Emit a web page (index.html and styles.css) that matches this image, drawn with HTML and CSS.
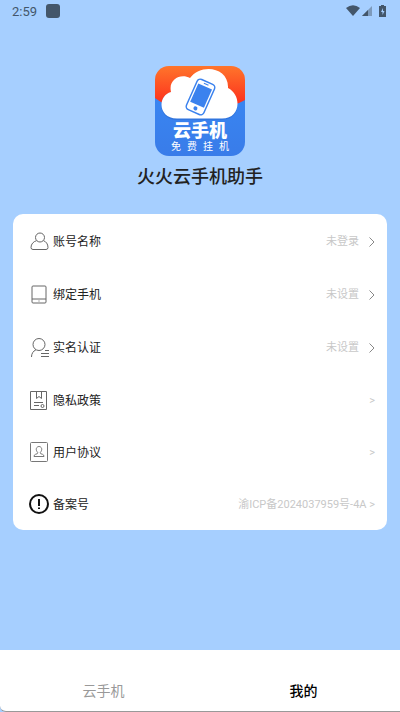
FILE: index.html
```html
<!DOCTYPE html>
<html lang="zh-CN">
<head>
<meta charset="utf-8">
<meta name="viewport" content="width=device-width, initial-scale=1">
<title>火火云手机助手</title>
<link rel="stylesheet" href="styles.css">
</head>
<body>
<header class="status">
  <span class="time">2:59</span>
  <span class="notice"></span>
  <svg class="signals" width="42" height="14" viewBox="0 0 42 14" aria-hidden="true">
    <path d="M0 4Q7-1.500 14 4L7 12Z" fill="#43566a"/>
    <path d="M16 12 26 2v10Z" fill="#7d9abb"/>
    <path d="M16 12l6-6v6Z" fill="#43566a"/>
    <path d="M35 1h3v1h2v11h-7V2h2Z" fill="#43566a"/>
    <path d="M37 4l-2 4h1.500v3L38.500 7H37Z" fill="#a6cfff"/>
  </svg>
</header>
<main class="page">
  <div class="logo">
    <svg class="logo-art" viewBox="0 0 90 90" aria-hidden="true">
      <defs>
        <linearGradient id="sky" x1="0" y1="0" x2="0" y2="1">
          <stop offset="0" stop-color="#ff752b"/><stop offset="1" stop-color="#fc281b"/>
        </linearGradient>
        <linearGradient id="sea" x1="0" y1="0" x2="0" y2="1">
          <stop offset="0" stop-color="#3985f1"/><stop offset="1" stop-color="#397ce9"/>
        </linearGradient>
      </defs>
      <path d="M0 0h90v42H0Z" fill="url(#sky)"/>
      <path d="M0 32Q5 36 12 39h66Q85 37 90 34v56H0Z" fill="url(#sea)"/>
      <path d="M22 54C3 54 1 29 17 26C14 14 28 7 36 13C47-2 73 3 72 25C87 30 86 54 67 54Z" fill="#2867ca" opacity=".45"/>
      <path d="M22 52.500C3 52.500 2 30 16 26C13 13 26 7 35 12C46-3 74 1 73 22C87 29 86 52.500 67 52.500Z" fill="#fff"/>
      <g transform="rotate(24 45.500 31)">
        <rect x="36" y="14.500" width="19" height="33" rx="3.500" fill="#fff" stroke="#3b82ee" stroke-width="1.500"/>
        <rect x="38" y="19.500" width="15" height="20" fill="#3b82ee"/>
        <path d="M43 17h5" stroke="#3b82ee"/>
        <circle cx="45.500" cy="43.500" r="2" fill="#3b82ee"/>
      </g>
    </svg>
    <div class="logo-words">
      <strong>云手机</strong>
      <div class="logo-sub"><span>免</span><span>费</span><span>挂</span><span>机</span></div>
    </div>
  </div>
  <h1>火火云手机助手</h1>
  <nav class="card" aria-label="设置">
    <a class="row" href="#account">
      <svg class="icon" viewBox="0 0 20 20"><circle cx="11" cy="5.500" r="4.500"/><path d="M7.500 8.700C4.500 9.500 2 12 2 15.500q0 2 2 2h13q2 0 2-2C19 12 17 9.500 14.500 8.700"/></svg>
      <span class="name">账号名称</span><span class="value">未登录</span>
      <svg class="arrow" viewBox="0 0 6 10"><path d="M.500.500 5 5 .500 9.500"/></svg>
    </a>
    <a class="row" href="#phone">
      <svg class="icon" viewBox="0 0 20 20"><rect x="3" y="1" width="14" height="17" rx="1"/><path d="M3 14h14M9.500 16h1"/></svg>
      <span class="name">绑定手机</span><span class="value">未设置</span>
      <svg class="arrow" viewBox="0 0 6 10"><path d="M.500.500 5 5 .500 9.500"/></svg>
    </a>
    <a class="row" href="#identity">
      <svg class="icon" viewBox="0 0 20 20"><circle cx="10" cy="6.500" r="6"/><path d="M7 11.700Q2.500 14 2.500 19M16 12.500h4M12 15.500h8M12 18.500h8"/></svg>
      <span class="name">实名认证</span><span class="value">未设置</span>
      <svg class="arrow" viewBox="0 0 6 10"><path d="M.500.500 5 5 .500 9.500"/></svg>
    </a>
    <a class="row compact" href="#privacy">
      <svg class="icon" viewBox="0 0 20 20"><path d="M1.500 1.500h16v18h-16ZM7.500 1.500v7l2.500-2 2.500 2v-7M5 12.500h9M5 15.500h5"/><circle cx="13.500" cy="16" r="1.500"/></svg>
      <span class="name">隐私政策</span><span class="value">&gt;</span>
    </a>
    <a class="row compact" href="#terms">
      <svg class="icon light" viewBox="0 0 20 20"><rect x="1.500" y=".5" width="17" height="19" rx="1"/><path d="M8.700 10.500C6 7.500 7.500 4.500 10 4.500s4 3 1.300 6Q11 12 13.500 12.300q1.500.500 1.500 2.200H5q0-1.700 1.500-2.200Q9 12 8.700 10.500"/></svg>
      <span class="name">用户协议</span><span class="value">&gt;</span>
    </a>
    <a class="row compact" href="#record">
      <svg class="icon strong" viewBox="0 0 20 20"><circle cx="10" cy="10" r="9"/><path d="M10 5v7M10 13.500v1.500"/></svg>
      <span class="name">备案号</span><span class="value">渝ICP备2024037959号-4A &gt;</span>
    </a>
  </nav>
</main>
<nav class="tabs" aria-label="主导航">
  <a href="#cloud">云手机</a>
  <a href="#mine" aria-current="page">我的</a>
</nav>
</body>
</html>
```
FILE: styles.css
```css
* { box-sizing: border-box; }

body {
  margin: 0;
  min-height: 100vh;
  display: flex;
  flex-direction: column;
  background: #a6cfff;
  color: #222;
  font-family: Roboto, "Noto Sans CJK SC", sans-serif;
}

a { color: inherit; text-decoration: none; }

.status {
  display: flex;
  align-items: center;
  height: 22px;
  padding: 0 12px;
  color: #43566a;
}

.time { font-size: 13px; }

.notice {
  width: 14px;
  height: 14px;
  margin-left: 9px;
  border-radius: 3px;
  background: #43566a;
}

.signals { margin-left: auto; }

.page {
  flex: 1;
  display: flex;
  flex-direction: column;
  align-items: center;
  padding: 44px 13px 0;
}

.logo {
  position: relative;
  width: 90px;
  height: 90px;
  border-radius: 14px;
  overflow: hidden;
}

.logo-art { display: block; width: 100%; }

.logo-words {
  position: absolute;
  inset: 56px 16px 0;
  color: #fff;
  text-align: center;
}

.logo-words strong {
  display: block;
  font-size: 18px;
  line-height: 18px;
  font-weight: 900;
}

.logo-sub {
  display: flex;
  justify-content: space-between;
  font-size: 10px;
  line-height: 14px;
}

h1 {
  margin: 7px 0 23px;
  font-size: 18px;
  line-height: 28px;
  font-weight: 500;
}

.card {
  width: 100%;
  padding: 1px 12px 0 16px;
  border-radius: 10px;
  background: #fff;
}

.row {
  display: flex;
  align-items: center;
  height: 53px;
}

.row.compact { height: 52px; }

.icon {
  width: 20px;
  height: 20px;
  fill: none;
  stroke: #666;
  stroke-width: 1;
}

.icon.light { stroke: #777; }
.icon.strong { stroke: #111; stroke-width: 2; }

.name {
  margin-left: 4px;
  padding-top: 1px;
  font-size: 12px;
  line-height: 20px;
}

.value {
  margin-left: auto;
  padding-top: 1px;
  color: #c8c8c8;
  font-size: 11px;
  line-height: 20px;
}

.arrow {
  width: 6px;
  height: 10px;
  margin-left: 10px;
  overflow: visible;
  fill: none;
  stroke: #888;
}

.tabs {
  display: flex;
  height: 62px;
  padding-top: 20px;
  border-bottom: 1px solid #999;
  border-bottom-left-radius: 6px;
  background: #fff;
  color: #999;
  font-size: 14px;
  line-height: 42px;
}

.tabs a { flex: 1; padding-left: 7px; text-align: center; }

.tabs [aria-current] { color: #000; font-weight: 500; }
```
